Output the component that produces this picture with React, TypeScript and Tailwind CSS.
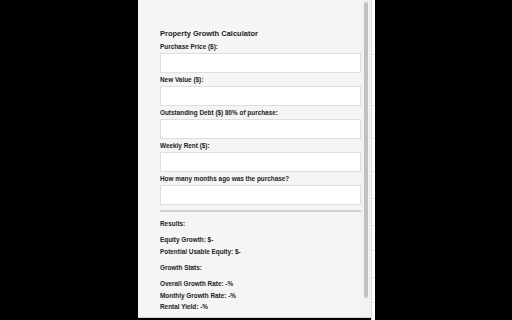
import React from 'react';

const fields = [
  'Purchase Price ($):',
  'New Value ($):',
  'Outstanding Debt ($) 80% of purchase:',
  'Weekly Rent ($):',
  'How many months ago was the purchase?',
];

export default function App() {
  return (
    <div className="flex h-[320px] w-[512px] overflow-hidden bg-black font-['Liberation_Sans',Arial,sans-serif] text-[#222]">
      <div className="w-[138px] shrink-0" />

      {/* popup */}
      <div className="flex h-[318px] w-[233px] shrink-0 overflow-hidden border-b border-[#d6d6d6] bg-[#f5f5f5]">
        <div className="w-[223px] shrink-0 pl-[22px] pt-[29px]">
          <h3 className="mb-[5px] text-[7.5px] font-bold leading-[9px]">Property Growth Calculator</h3>

          {fields.map((label) => (
            <div key={label} className="mb-[3px]">
              <label className="mb-[2px] block text-[6.4px] font-bold leading-[8px]">{label}</label>
              <input className="block h-[20px] w-[201px] border border-[#dedede] bg-white outline-none" />
            </div>
          ))}

          <div className="mt-[5px] w-[201px] border-t-[2px] border-[#d2d2d2]" />

          <div className="mt-[8px] text-[6.4px] font-bold">
            <p className="leading-[8px]">Results:</p>
            <div className="mt-[6px] leading-[12px]">
              <p>Equity Growth: $-</p>
              <p>Potential Usable Equity: $-</p>
            </div>
            <p className="mt-[6px] leading-[8px]">Growth Stats:</p>
            <div className="mt-[6px] leading-[11.5px]">
              <p>Overall Growth Rate: -%</p>
              <p>Monthly Growth Rate: -%</p>
              <p>Rental Yield: -%</p>
            </div>
          </div>
        </div>

        {/* scrollbar */}
        <div className="flex w-[10px] shrink-0 justify-center bg-[#f1f1f1] pt-[2px]">
          <div className="h-[296px] w-[4px] rounded-full bg-[#c1c1c1]" />
        </div>
      </div>

      {/* sliver of page behind */}
      <div className="flex h-[320px] w-[4px] shrink-0 flex-col border-l border-[#dcdcdc] bg-white">
        <div className="mt-[54px] h-px bg-[#e4e4e4]" />
        <div className="mt-[50px] h-px bg-[#e4e4e4]" />
        <div className="mt-[32px] h-px bg-[#e4e4e4]" />
        <div className="mt-[32px] h-px bg-[#e4e4e4]" />
        <div className="mt-[26px] h-px bg-[#e4e4e4]" />
        <div className="mt-[26px] h-px bg-[#e4e4e4]" />
        <div className="mt-[24px] h-px bg-[#e4e4e4]" />
        <div className="mt-[26px] h-px bg-[#e4e4e4]" />
        <div className="mt-[24px] h-px bg-[#e4e4e4]" />
      </div>
    </div>
  );
}
